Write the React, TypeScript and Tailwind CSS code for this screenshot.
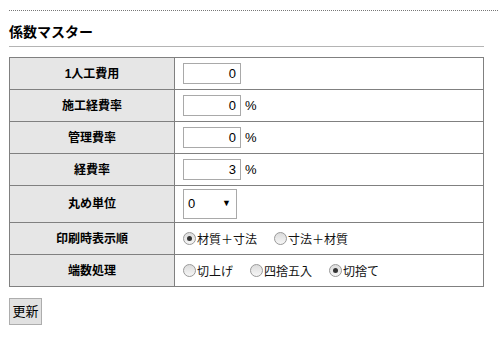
const font = { fontFamily: '"Liberation Sans", "Noto Sans CJK JP", sans-serif' }

const numRows = [
  { label: '1人工費用', value: '0', unit: '' },
  { label: '施工経費率', value: '0', unit: '%' },
  { label: '管理費率', value: '0', unit: '%' },
  { label: '経費率', value: '3', unit: '%' },
]

function Radio({ checked, label }: { checked?: boolean; label: string }) {
  return (
    <label className="flex items-center mr-[17px]">
      <span className="w-[13px] h-[13px] rounded-full border border-[#9a9a9a] bg-gradient-to-b from-[#dcdcdc] to-[#f6f6f6] flex items-center justify-center">
        {checked && <span className="w-[5px] h-[5px] rounded-full bg-[#333]" />}
      </span>
      <span className="text-[12px] leading-[16px] text-[#111] ml-[1px] mt-[3px]">{label}</span>
    </label>
  )
}

export default function App() {
  return (
    <div className="w-[498px] h-[345px] bg-white pt-[10px] text-black" style={font}>
      <div className="ml-[9px] border-t border-dotted border-[#777]" />
      <div className="mx-[9px] w-[475px]">
        <h2 className="mt-[11px] text-[14px] leading-[20px] font-bold pb-[4px] border-b border-[#b4b4b4]">係数マスター</h2>

        <table className="mt-[10px] w-[475px] border-collapse border border-[#808080]">
          <tbody>
            {numRows.map(r => (
              <tr key={r.label} className="h-[32px]">
                <th className="w-[165px] bg-[#e6e6e6] border border-[#808080] text-[12px] font-bold text-center p-0">{r.label}</th>
                <td className="border border-[#808080] px-[8px] py-0">
                  <div className="flex items-center">
                    <div className="w-[58px] h-[21px] border border-[#a9a9a9] bg-white text-[13px] leading-[19px] text-right pr-[4px]">{r.value}</div>
                    {r.unit && <span className="ml-[4px] text-[13px]">{r.unit}</span>}
                  </div>
                </td>
              </tr>
            ))}
            <tr className="h-[37px]">
              <th className="bg-[#e6e6e6] border border-[#808080] text-[12px] font-bold text-center p-0">丸め単位</th>
              <td className="border border-[#808080] px-[8px] py-0">
                <div className="w-[54px] h-[30px] border border-[#a9a9a9] bg-white flex items-center justify-between pl-[4px] pr-[5px] text-[13px]">
                  <span>0</span>
                  <span className="text-[9px]">▼</span>
                </div>
              </td>
            </tr>
            <tr className="h-[32px]">
              <th className="bg-[#e6e6e6] border border-[#808080] text-[12px] font-bold text-center p-0">印刷時表示順</th>
              <td className="border border-[#808080] px-[8px] py-0">
                <div className="flex items-center">
                  <Radio checked label="材質＋寸法" />
                  <Radio label="寸法＋材質" />
                </div>
              </td>
            </tr>
            <tr className="h-[32px]">
              <th className="bg-[#e6e6e6] border border-[#808080] text-[12px] font-bold text-center p-0">端数処理</th>
              <td className="border border-[#808080] px-[8px] py-0">
                <div className="flex items-center">
                  <Radio label="切上げ" />
                  <Radio label="四捨五入" />
                  <Radio checked label="切捨て" />
                </div>
              </td>
            </tr>
          </tbody>
        </table>

        <button className="mt-[11px] w-[33px] h-[27px] border border-[#adadad] bg-[#e1e1e1] text-[13px] leading-none p-0">更新</button>
      </div>
    </div>
  )
}
